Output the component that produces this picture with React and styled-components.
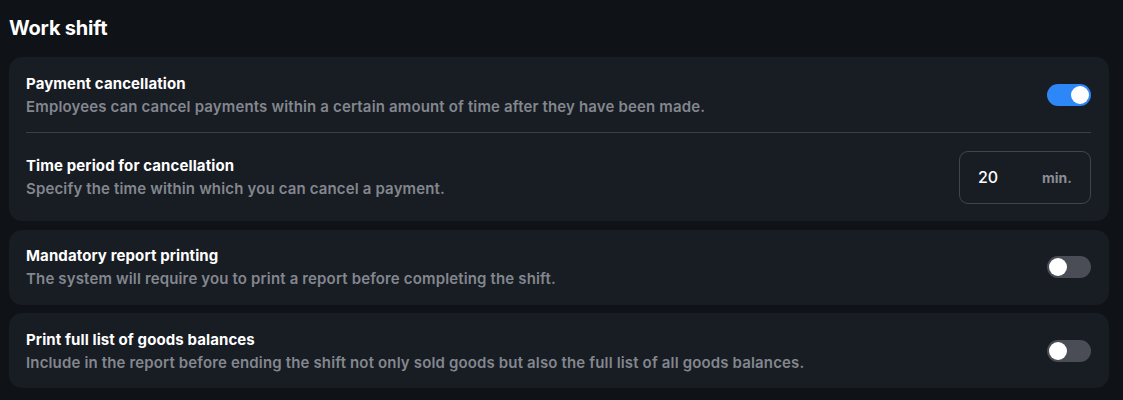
import React, { useState } from 'react';
import styled, { createGlobalStyle } from 'styled-components';

const GlobalStyle = createGlobalStyle`
  html, body {
    margin: 0;
    padding: 0;
    background: #0f1216;
  }
  body {
    font-family: Inter, "Noto Sans", "Liberation Sans", sans-serif;
    color: #ffffff;
  }
  * {
    box-sizing: border-box;
  }
`;

const Container = styled.div`
  padding: 16px 14px 12px 9px;
  min-height: 400px;
  background: #0f1216;
`;

const Title = styled.h2`
  margin: 0 0 17px;
  font-size: 20px;
  line-height: 24px;
  font-weight: 700;
  letter-spacing: -0.2px;
  color: #ffffff;
`;

const CardList = styled.div`
  display: flex;
  flex-direction: column;
  gap: 8.5px;
`;

const Card = styled.div`
  background: #181c23;
  border-radius: 13px;
  padding: 0 18px 0 17px;
`;

const Row = styled.div`
  display: flex;
  align-items: center;
  justify-content: space-between;
  gap: 24px;
  padding: 15.5px 0;
  min-height: ${props => (props.$tall ? '89px' : '75px')};
  border-top: ${props => (props.$divided ? '1px solid #3a3e46' : 'none')};
`;

const Info = styled.div`
  display: flex;
  flex-direction: column;
  gap: 2px;
`;

const RowTitle = styled.div`
  font-size: 15px;
  line-height: 21px;
  font-weight: 700;
  letter-spacing: 0.1px;
  color: #ffffff;
`;

const RowDescription = styled.div`
  font-size: 15px;
  line-height: 21px;
  font-weight: 600;
  letter-spacing: 0.15px;
  color: #83878e;
`;

const Switch = styled.button`
  flex-shrink: 0;
  width: 44px;
  height: 22px;
  padding: 2px;
  border: none;
  border-radius: 11px;
  cursor: pointer;
  display: flex;
  align-items: center;
  justify-content: ${props => (props.$on ? 'flex-end' : 'flex-start')};
  background: ${props => (props.$on ? '#2d87f6' : '#4a4d55')};
`;

const Knob = styled.span`
  width: 18px;
  height: 18px;
  border-radius: 50%;
  background: #ffffff;
`;

const MinutesField = styled.label`
  flex-shrink: 0;
  width: 132px;
  height: 53px;
  display: flex;
  align-items: center;
  justify-content: space-between;
  padding: 0 18px;
  border: 1px solid #41454d;
  border-radius: 9px;
`;

const MinutesInput = styled.input`
  width: 50px;
  background: transparent;
  border: none;
  outline: none;
  padding: 0;
  font-family: inherit;
  font-size: 16px;
  font-weight: 500;
  color: #ffffff;
`;

const Unit = styled.span`
  font-size: 14px;
  font-weight: 700;
  color: #8a8d93;
`;

const Toggle = ({ on, onClick }) => (
  <Switch $on={on} onClick={onClick} aria-pressed={on}>
    <Knob />
  </Switch>
);

const App = () => {
  const [settings, setSettings] = useState({
    cancellation: true,
    mandatoryReport: false,
    fullBalances: false,
  });
  const [minutes, setMinutes] = useState('20');

  const toggle = key => setSettings(prev => ({ ...prev, [key]: !prev[key] }));

  return (
    <>
      <GlobalStyle />
      <Container>
        <Title>Work shift</Title>
        <CardList>
          <Card>
            <Row>
              <Info>
                <RowTitle>Payment cancellation</RowTitle>
                <RowDescription>
                  Employees can cancel payments within a certain amount of time after they have been made.
                </RowDescription>
              </Info>
              <Toggle on={settings.cancellation} onClick={() => toggle('cancellation')} />
            </Row>
            <Row $divided $tall>
              <Info>
                <RowTitle>Time period for cancellation</RowTitle>
                <RowDescription>Specify the time within which you can cancel a payment.</RowDescription>
              </Info>
              <MinutesField>
                <MinutesInput value={minutes} onChange={e => setMinutes(e.target.value)} />
                <Unit>min.</Unit>
              </MinutesField>
            </Row>
          </Card>

          <Card>
            <Row>
              <Info>
                <RowTitle>Mandatory report printing</RowTitle>
                <RowDescription>The system will require you to print a report before completing the shift.</RowDescription>
              </Info>
              <Toggle on={settings.mandatoryReport} onClick={() => toggle('mandatoryReport')} />
            </Row>
          </Card>

          <Card>
            <Row>
              <Info>
                <RowTitle>Print full list of goods balances</RowTitle>
                <RowDescription>
                  Include in the report before ending the shift not only sold goods but also the full list of all goods balances.
                </RowDescription>
              </Info>
              <Toggle on={settings.fullBalances} onClick={() => toggle('fullBalances')} />
            </Row>
          </Card>
        </CardList>
      </Container>
    </>
  );
};

export default App;
